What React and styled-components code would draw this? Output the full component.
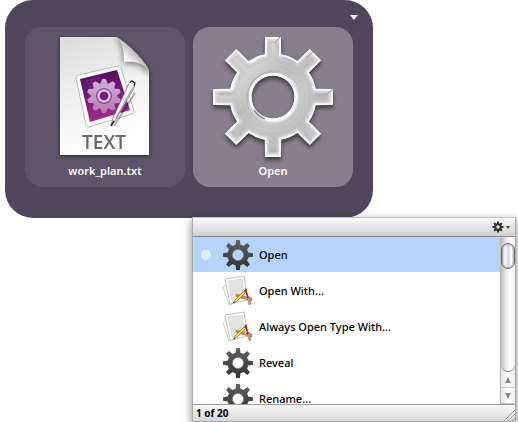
import React, { useState } from 'react';
import styled, { createGlobalStyle } from 'styled-components';

const GlobalStyle = createGlobalStyle`
    body {
        margin: 0;
        background: #fff;
        font-family: "Noto Sans", "Open Sans", sans-serif;
        font-size: 11px;
        font-weight: 500;
        color: #000;
    }

    button {
        font: inherit;
        color: inherit;
        border: 0;
        padding: 0;
        background: none;
    }
`;

const actions = [
    { label: 'Open', icon: 'gear' },
    { label: 'Open With...', icon: 'apps' },
    { label: 'Always Open Type With...', icon: 'apps' },
    { label: 'Reveal', icon: 'gear' },
    { label: 'Rename...', icon: 'gear' },
];

// Outline of a cog centred on 0,0. base and tip are half the width of a tooth at its root and at its end
function cog ({ teeth = 8, outer, body, base, tip }) {
    const root = Math.sqrt(body * body - base * base);
    const points = [];
    for (let i = 0; i < teeth; i++) {
        const a = (i * 2 * Math.PI) / teeth - Math.PI / 2;
        const at = (x, y) => `${(x * Math.cos(a) - y * Math.sin(a)).toFixed(2)} ${(x * Math.sin(a) + y * Math.cos(a)).toFixed(2)}`;
        points.push(`${i ? `A${body} ${body} 0 0 1 ` : 'M'}${at(root, -base)}`);
        points.push(`L${at(outer, -tip)}L${at(outer, tip)}L${at(root, base)}`);
    }
    return `${points.join('')}A${body} ${body} 0 0 1 ${(-base).toFixed(2)} ${(-root).toFixed(2)}Z`;
}

const hole = r => `M${r} 0A${r} ${r} 0 1 0 ${-r} 0A${r} ${r} 0 1 0 ${r} 0Z`;

const metalCog = cog({ outer: 60, body: 43.5, base: 8.2, tip: 8 });
const innerCog = cog({ outer: 55, body: 39, base: 4, tip: 4 });
const darkCog = cog({ outer: 15, body: 10.6, base: 2.5, tip: 1.8 });
const tinyCog = cog({ outer: 5.5, body: 3.9, base: 1.1, tip: 0.9 });
const badgeCog = cog({ teeth: 10, outer: 17, body: 13, base: 3.6, tip: 1.8 });

function MetalGear () {
    return (
        <MetalSvg viewBox="-60 -60 120 120" aria-hidden="true">
            <defs>
                <linearGradient id="metal" x1="0" y1="0" x2="1" y2="1">
                    <stop offset="0.1" stopColor="#d2d2d2" />
                    <stop offset="0.3" stopColor="#d0d0d0" />
                    <stop offset="0.42" stopColor="#bababa" />
                    <stop offset="0.6" stopColor="#c8c8c8" />
                    <stop offset="0.75" stopColor="#bcbcbc" />
                    <stop offset="0.95" stopColor="#d6d6d6" />
                </linearGradient>
                <linearGradient id="rim" x1="0" y1="0" x2="1" y2="1">
                    <stop offset="0" stopColor="#a2a2a2" />
                    <stop offset="0.5" stopColor="#d5d5d5" />
                    <stop offset="1" stopColor="#e8e8e8" />
                </linearGradient>
                <clipPath id="metalClip">
                    <path d={metalCog + hole(21.5)} clipRule="evenodd" />
                </clipPath>
                <filter id="soft"><feGaussianBlur stdDeviation="0.8" /></filter>
            </defs>
            <g clipPath="url(#metalClip)">
                <path d={metalCog} fill="#dedede" />
                <g filter="url(#soft)">
                    <path d={innerCog} fill="url(#metal)" stroke="#c2c2c2" strokeWidth="2" strokeLinejoin="round" />
                    <path d="M-17 -38A42 42 0 0 0 -24 -34M-38 -17A42 42 0 0 0 -41 -8" fill="none" stroke="#fff" strokeWidth="3.5" />
                    <path d="M10 -41L25 -34" stroke="#999" strokeWidth="1.6" />
                    <path d="M6 -53L7 -43M-53 -3H-41M42 -2H53M-4 54H4M32 37L38 43" stroke="#a8a8a8" strokeWidth="1.4" />
                    <circle r="34" fill="none" stroke="#d4d4d4" strokeWidth="0.7" />
                    <circle r="29" fill="none" stroke="#d4d4d4" strokeWidth="1" />
                </g>
                <path d={metalCog} fill="none" stroke="#f6f6f6" strokeWidth="4" />
                <path d="M2 -54L7 -60M53 -2L60 -8M33 -39L42 -47" stroke="#999" strokeWidth="1" />
                <circle r="25" fill="none" stroke="url(#rim)" strokeWidth="2" />
                <circle r="22.8" fill="none" stroke="#fcfcfc" strokeWidth="3" />
                <path d="M-19 13A23 23 0 0 0 -8 22" fill="none" stroke="#8f8f8f" strokeWidth="1.6" />
            </g>
        </MetalSvg>
    );
}

function DarkGear () {
    return (
        <svg width="30" height="30" viewBox="-15 -15 30 30" aria-hidden="true">
            <defs>
                <linearGradient id="dark" x1="0" y1="0" x2="0" y2="1">
                    <stop offset="0" stopColor="#606060" />
                    <stop offset="1" stopColor="#323232" />
                </linearGradient>
            </defs>
            <path d={darkCog + hole(5.4)} fill="url(#dark)" fillRule="evenodd" />
            <circle r="5.7" fill="none" stroke="#8a8a8a" strokeWidth="0.7" />
        </svg>
    );
}

function TextFile () {
    return (
        <FileSvg viewBox="0 0 90 118" aria-hidden="true">
            <defs>
                <linearGradient id="paper" x1="0" y1="0" x2="0.3" y2="1">
                    <stop offset="0" stopColor="#dcdcdc" />
                    <stop offset="0.6" stopColor="#f3f3f3" />
                    <stop offset="1" stopColor="#fff" />
                </linearGradient>
                <linearGradient id="curl" x1="0" y1="1" x2="0.75" y2="0.3">
                    <stop offset="0" stopColor="#fff" />
                    <stop offset="0.5" stopColor="#f4f4f4" />
                    <stop offset="1" stopColor="#8b8b8b" />
                </linearGradient>
                <linearGradient id="purple" x1="0" y1="0" x2="0.2" y2="1">
                    <stop offset="0" stopColor="#480b5c" />
                    <stop offset="1" stopColor="#a32b86" />
                </linearGradient>
                <linearGradient id="mauve" x1="0" y1="0" x2="0" y2="1">
                    <stop offset="0" stopColor="#cdb4d8" />
                    <stop offset="1" stopColor="#b878b4" />
                </linearGradient>
                <clipPath id="sheet">
                    <path d="M0 0H56C64 3 86 24 89 34V118H0Z" />
                </clipPath>
                <filter id="shade" x="-50%" y="-50%" width="200%" height="200%"><feGaussianBlur stdDeviation="3" /></filter>
            </defs>
            <path d="M0 0H56C64 3 86 24 89 34V118H0Z" fill="url(#paper)" />
            <g clipPath="url(#sheet)">
                <path d="M56 0C62 6 63 16 64 27C74 26 84 27 90 40V0Z" fill="#777" filter="url(#shade)" />
            </g>
            <path d="M56 0C63 5 64 15 64 25C74 24 84 26 89 34C86 24 64 3 56 0Z" fill="url(#curl)" />
            <path d="M18 38L58 29Q60 28 61 31L74 74Q74 76 72 77L29 90Q27 90 26 88L16 41Q16 39 18 38Z" fill="#fafafa" stroke="#aaa" strokeWidth="0.8" />
            <path d="M20 42L57 33L70 73L30 85Z" fill="url(#purple)" />
            <path d="M26 44L40 41M27 47L36 45M28 50L34 49M32 78L46 74M33 81L51 76M57 71L65 69" stroke="#7b3a91" strokeWidth="0.7" />
            <g transform="translate(44 59)">
                <path d={badgeCog + hole(4.5)} fill="url(#mauve)" fillRule="evenodd" />
                <circle r="7.5" fill="none" stroke="#7b4c90" strokeWidth="1" />
                <circle r="5.2" fill="none" stroke="#e9dcee" strokeWidth="1.2" />
            </g>
            <path d="M54 89L75 56" stroke="#000" strokeOpacity="0.3" strokeWidth="2" />
            <path d="M51 88L53 81L69 46L72 44L75 46L74 51L55 84Z" fill="#f5f5f5" stroke="#666" strokeWidth="0.7" />
            <path d="M56 81L73 50" stroke="#888" strokeWidth="0.9" />
            <path d="M70 45L72 44L75 46L74 49" fill="none" stroke="#222" strokeWidth="1.2" />
            <path d="M51 89L54 84" stroke="#333" strokeWidth="1.8" />
            <FileKind x="44" y="112" textAnchor="middle">TEXT</FileKind>
        </FileSvg>
    );
}

function AppsIcon () {
    return (
        <svg width="32" height="32" viewBox="0 0 32 32" aria-hidden="true">
            <path d="M1 12L8 6L15 27L7 30Z" fill="#fff" stroke="#bbb" strokeWidth="0.7" />
            <path d="M3 4L22 1L26 25L8 29Z" fill="#fff" stroke="#b0b0b0" strokeWidth="0.8" />
            <path d="M6 6L20 4L23 23L10 26Z" fill="#e1e4e1" stroke="#d2d2d2" strokeWidth="0.6" />
            <path d="M14 19L30 23L30 26L14 21.5Z" fill="#c98c5f" stroke="#976343" strokeWidth="0.4" />
            <path d="M25 22L27 21L29 29L27 30Z" fill="#d69a70" stroke="#8c5b42" strokeWidth="0.4" />
            <path d="M23.5 13.5L26 23" stroke="#a3281d" strokeWidth="1.5" />
            <path d="M13 25L22 16L23.5 17.5L14.5 26.5L11.5 28Z" fill="#ffe02e" stroke="#7d5a1b" strokeWidth="0.6" />
            <path d="M22 16L23.5 14L25 15.5L23.5 17.5Z" fill="#a62d21" />
            <path d="M11.5 28L12 26.5L13 27.3Z" fill="#222" />
        </svg>
    );
}

export default function App () {
    const [selected, setSelected] = useState(0);

    return (
        <Page>
            <GlobalStyle />
            <Panel>
                <PanelBar>
                    <CaretButton aria-label="Menu">
                        <Caret />
                    </CaretButton>
                </PanelBar>
                <Cards>
                    <Card>
                        <Artwork><TextFile /></Artwork>
                        work_plan.txt
                    </Card>
                    <Card active>
                        <Artwork><MetalGear /></Artwork>
                        {actions[selected].label}
                    </Card>
                </Cards>
            </Panel>

            <Results>
                <Toolbar>
                    <ToolButton aria-label="Actions">
                        <svg width="12" height="12" viewBox="-6 -6 12 12" aria-hidden="true">
                            <path d={tinyCog + hole(1.7)} fill="#333" fillRule="evenodd" />
                        </svg>
                        <SmallCaret />
                    </ToolButton>
                </Toolbar>
                <Body>
                    <List>
                        {actions.map(({ label, icon }, i) => (
                            <li key={label}>
                                <Row $selected={i === selected} onClick={() => setSelected(i)}>
                                    <Dot $selected={i === selected} />
                                    <RowIcon>{icon === 'gear' ? <DarkGear /> : <AppsIcon />}</RowIcon>
                                    {label}
                                </Row>
                            </li>
                        ))}
                    </List>
                    <Scrollbar>
                        <Track>
                            <Thumb />
                        </Track>
                        <ArrowButton aria-label="Scroll up"><Arrow up /></ArrowButton>
                        <ArrowButton aria-label="Scroll down"><Arrow /></ArrowButton>
                    </Scrollbar>
                </Body>
                <Status>
                    1 of 20
                    <svg width="12" height="12" viewBox="0 0 12 12" aria-hidden="true">
                        <path d="M1 12L12 1M5 12L12 5M9 12L12 9" stroke="#999" strokeWidth="1" />
                        <path d="M2 12L12 2M6 12L12 6" stroke="#fff" strokeWidth="0.6" />
                    </svg>
                </Status>
            </Results>
        </Page>
    );
}

const Page = styled.main`
    display: flex;
    flex-direction: column;
    overflow: hidden;
`;

const Panel = styled.section`
    margin: 0 145px 0 5px;
    padding: 0 20px 31px;
    border-radius: 28px;
    background: #50465b;
`;

const PanelBar = styled.div`
    display: flex;
    justify-content: flex-end;
    height: 27px;
    margin-right: -5px;
`;

const CaretButton = styled.button`
    display: flex;
    padding-top: 15px;
`;

const Caret = styled.span`
    border: 4px solid transparent;
    border-top: 5px solid #fff;
    border-bottom: 0;
`;

const Cards = styled.div`
    display: flex;
    gap: 8px;
`;

const CardButton = styled.button`
    flex: 1;
    display: flex;
    flex-direction: column;
    align-items: center;
    gap: 6px;
    padding: 10px 10px 8px;
    border-radius: 17px;
    font-weight: 600;
    line-height: 16px;
    color: #fff;
    background: ${p => p.$active ? '#877f8d' : '#5f5569'};
`;

const Card = ({ active, children }) => <CardButton $active={active}>{children}</CardButton>;

const Artwork = styled.span`
    display: flex;
    justify-content: center;
    width: 120px;
    height: 120px;
`;

const MetalSvg = styled.svg`
    width: 120px;
    height: 120px;
    overflow: visible;
    filter: drop-shadow(0 3px 2px rgba(20, 15, 25, 0.65));
`;

const FileSvg = styled.svg`
    width: 90px;
    height: 118px;
    overflow: visible;
    filter: drop-shadow(0 1px 2px rgba(0, 0, 0, 0.6));
`;

const FileKind = styled.text`
    font-family: "Open Sans", sans-serif;
    font-size: 19px;
    font-weight: 600;
    fill: #6a6a6a;
`;

const Results = styled.section`
    margin: -1px 2px 0 192px;
    border: 1px solid #a9a9a9;
    border-top-color: #c4c4c4;
    background: #fff;
    box-shadow: 0 3px 8px rgba(0, 0, 0, 0.5);
`;

const Toolbar = styled.header`
    display: flex;
    justify-content: flex-end;
    height: 18px;
    padding-right: 5px;
    border-bottom: 1px solid #8c8c8c;
    background: linear-gradient(#fbfbfb, #d0d0d0);
`;

const ToolButton = styled.button`
    display: flex;
    align-items: center;
    gap: 2px;
`;

const SmallCaret = styled.span`
    border: 2px solid transparent;
    border-top: 3px solid #444;
    border-bottom: 0;
`;

const Body = styled.div`
    display: flex;
    height: 167px;
`;

const List = styled.ul`
    flex: 1;
    margin: 0;
    padding: 0;
    list-style: none;
    overflow: hidden;
`;

const Row = styled.button`
    display: flex;
    align-items: center;
    width: 100%;
    height: 36px;
    padding-left: 8px;
    border-bottom: 1px solid transparent;
    background: ${p => p.$selected ? '#b5d5ff' : '#fff'};
    background-clip: padding-box;
`;

const Dot = styled.span`
    width: 10px;
    height: 10px;
    margin-right: 10px;
    border-radius: 50%;
    background: ${p => p.$selected ? '#e3efff' : 'transparent'};
`;

const RowIcon = styled.span`
    display: flex;
    justify-content: center;
    width: 34px;
    margin-right: 4px;
`;

const Scrollbar = styled.div`
    display: flex;
    flex-direction: column;
    width: 15px;
    box-sizing: border-box;
    border-left: 1px solid #b9b9b9;
    background: linear-gradient(to right, #e2e2e2, #fff 50%, #ececec);
`;

const Track = styled.div`
    flex: 1;
    padding-top: 6px;
    border-bottom: 1px solid #8a8a8a;
    border-radius: 0 0 8px 8px;
    background: linear-gradient(to right, #bdbdbd, #e9e9e9 35%, #fff 65%, #f0f0f0);
`;

const Thumb = styled.div`
    height: 26px;
    box-sizing: border-box;
    border: 1px solid #6d6d6d;
    border-radius: 7px;
    background: linear-gradient(to right, #b5b5b5, #fff 25%, #d8d8d8 50%, #fff 80%, #bbb);
    box-shadow: inset 0 0 2px #777;
`;

const ArrowButton = styled.button`
    display: flex;
    align-items: center;
    justify-content: center;
    height: 16px;
    border-bottom: 1px solid #c6c6c6;
`;

const ArrowShape = styled.span`
    border: 3px solid transparent;
    border-top: ${p => p.$up ? '0' : '6px solid #8a8a8a'};
    border-bottom: ${p => p.$up ? '6px solid #8a8a8a' : '0'};
`;

const Arrow = ({ up }) => <ArrowShape $up={up} />;

const Status = styled.footer`
    display: flex;
    align-items: flex-end;
    justify-content: space-between;
    height: 16px;
    padding-left: 3px;
    border-top: 1px solid #9c9c9c;
    font-size: 10px;
    font-weight: 700;
    line-height: 16px;
    background: linear-gradient(#fafafa, #d6d6d6);
`;
